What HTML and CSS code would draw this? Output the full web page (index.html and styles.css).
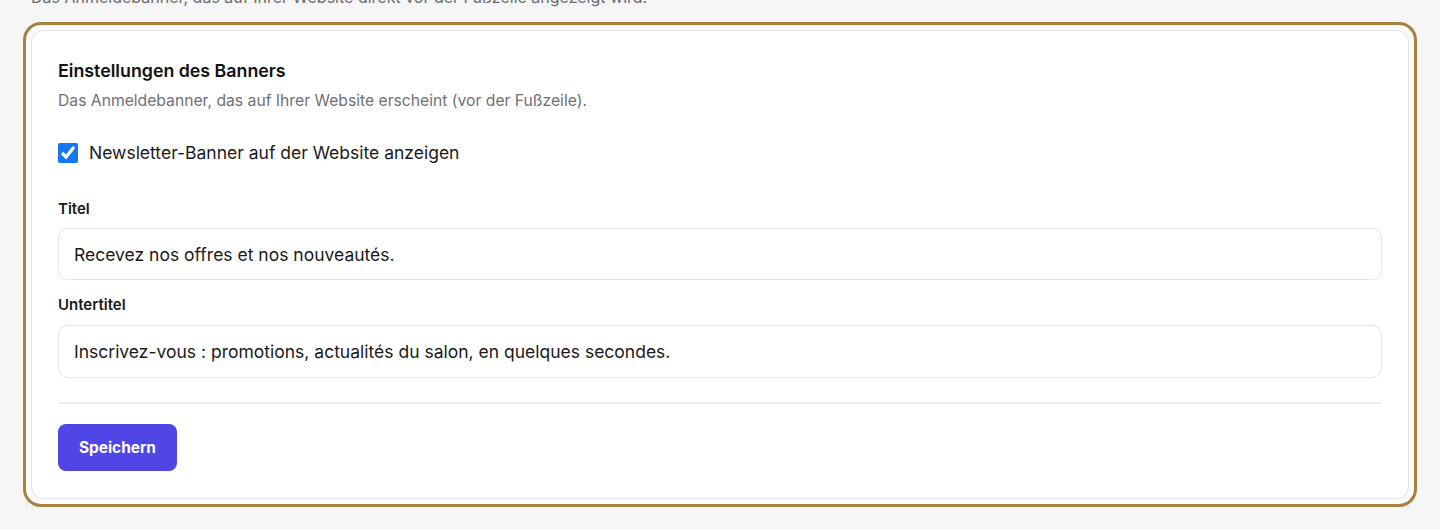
FILE: index.html
```html
<!DOCTYPE html>
<html lang="de">
<head>
<meta charset="utf-8">
<title>Einstellungen des Banners</title>
<link rel="stylesheet" href="styles.css">
</head>
<body>
<div class="page">
  <p class="intro">Das Anmeldebanner, das auf Ihrer Website direkt vor der Fußzeile angezeigt wird.</p>
  <div class="frame">
    <section class="card">
      <h2 class="title">Einstellungen des Banners</h2>
      <p class="desc">Das Anmeldebanner, das auf Ihrer Website erscheint (vor der Fußzeile).</p>
      <label class="check-row">
        <input type="checkbox" class="check" checked>
        <span>Newsletter-Banner auf der Website anzeigen</span>
      </label>
      <div class="field">
        <label class="field-label">Titel</label>
        <input class="text-input" type="text" value="Recevez nos offres et nos nouveautés.">
      </div>
      <div class="field field-second">
        <label class="field-label">Untertitel</label>
        <input class="text-input" type="text" value="Inscrivez-vous : promotions, actualités du salon, en quelques secondes.">
      </div>
      <hr class="divider">
      <button class="btn" type="button">Speichern</button>
    </section>
  </div>
</div>
</body>
</html>
```

FILE: styles.css
```css
html, body {
  margin: 0;
  padding: 0;
  background: #f6f6f6;
  font-family: Inter, "Noto Sans", "Liberation Sans", sans-serif;
  color: #111827;
  overflow: hidden;
}

.page {
  padding: 0 23px;
}

.intro {
  margin: -14px 0 14px 8px;
  font-size: 16px;
  line-height: 22px;
  color: #6b6b70;
  white-space: nowrap;
}

.frame {
  border: 3px solid #a9803f;
  border-radius: 18px;
  padding: 5px;
  background: #fbfbfb;
}

.card {
  background: #ffffff;
  border: 1px solid #e3e4e8;
  border-radius: 12px;
  padding: 28px 26px 27px;
  display: flex;
  flex-direction: column;
  align-items: flex-start;
}

.title {
  margin: 0;
  font-size: 17.8px;
  line-height: 24px;
  font-weight: 600;
  color: #111111;
}

.desc {
  margin: 8px 0 0;
  font-size: 15.7px;
  line-height: 20px;
  color: #707075;
}

.check-row {
  margin-top: 30px;
  display: flex;
  align-items: center;
  gap: 11px;
  font-size: 17.5px;
  line-height: 24px;
  color: #1a1a1a;
}

.check {
  width: 20px;
  height: 20px;
  margin: 0;
  accent-color: #1578f2;
}

.field {
  margin-top: 34px;
  width: 100%;
  display: flex;
  flex-direction: column;
}

.field-second {
  margin-top: 15px;
}

.field-label {
  font-size: 15px;
  line-height: 20px;
  font-weight: 600;
  color: #1a1a1a;
}

.text-input {
  margin-top: 9px;
  box-sizing: border-box;
  width: 100%;
  height: 52px;
  padding: 0 15px;
  border: 1px solid #e4e5e8;
  border-radius: 10px;
  background: #ffffff;
  font-family: inherit;
  font-size: 17.5px;
  color: #1a1a1a;
  outline: none;
}

.field-second .text-input {
  margin-top: 10px;
  height: 53px;
}

.divider {
  margin: 24px 0 0;
  width: 100%;
  height: 0;
  border: 0;
  border-top: 2px solid #ececee;
}

.btn {
  margin-top: 20px;
  height: 47px;
  padding: 0 21px;
  border: 0;
  border-radius: 8px;
  background: #4f46e5;
  color: #ffffff;
  font-family: inherit;
  font-size: 15.4px;
  font-weight: 700;
  cursor: pointer;
}
```
